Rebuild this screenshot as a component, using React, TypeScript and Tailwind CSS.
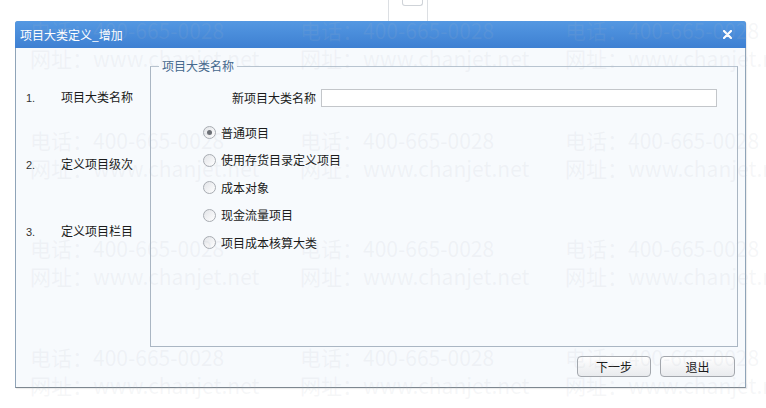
import React, { useState } from 'react';

const steps = [
    { no: '1.', label: '项目大类名称' },
    { no: '2.', label: '定义项目级次' },
    { no: '3.', label: '定义项目栏目' },
];

const kinds = ['普通项目', '使用存货目录定义项目', '成本对象', '现金流量项目', '项目成本核算大类'];

const markCols = [30, 300, 565];
const markRows = [16, 126, 234, 343];

const Radio: React.FC<{ checked: boolean }> = ({ checked }) => (
    <span className="w-[13px] h-[13px] rounded-full border border-[#a8acb2] bg-gradient-to-br from-[#e2e4e8] to-white flex items-center justify-center shrink-0">
        {checked && <span className="w-[5px] h-[5px] rounded-full bg-[#6b6f75]" />}
    </span>
);

const App: React.FC = () => {
    const [kind, setKind] = useState(0);
    const [name, setName] = useState('');

    return (
        <div
            className="relative w-[766px] h-[408px] bg-white overflow-hidden text-[12px] text-[#1a1a1a]"
            style={{ fontFamily: '"Noto Sans CJK SC", "Noto Sans", sans-serif' }}
        >
            {/* faint tab peeking above the dialog */}
            <div className="absolute left-[388px] top-0 w-[40px] h-[21px] border-x border-[#dcdfe3] bg-white">
                <div className="ml-[13px] w-[21px] h-[6px] border border-t-0 border-[#cfd3d8] rounded-b-[3px]" />
            </div>

            <div className="relative ml-[15px] mt-[21px] w-[731px] h-[367px] flex flex-col rounded-t-[3px] border border-[#8fa4b8] border-b-[#7d8790] bg-[#f7fafd] shadow-[1px_1px_1px_rgba(0,0,0,0.08)]">
                <div className="h-[27px] -mx-px -mt-px flex items-center justify-between pl-[5px] pr-[14px] rounded-t-[3px] bg-gradient-to-b from-[#5498e2] to-[#3e80d2] text-white">
                    <span className="leading-none">项目大类定义_增加</span>
                    <svg width="9" height="9" viewBox="0 0 9 9">
                        <path d="M1 1 L8 8 M8 1 L1 8" stroke="white" strokeWidth="2.2" strokeLinecap="round" />
                    </svg>
                </div>

                <div className="flex flex-1">
                    <div className="w-[134px] pt-[39px] flex flex-col gap-[47px]">
                        {steps.map(s => (
                            <div key={s.no} className="h-[20px] flex items-center">
                                <span className="w-[45px] pl-[10px] text-[11px] text-[#333] pt-[3px]" style={{ fontFamily: '"Liberation Sans", sans-serif' }}>{s.no}</span>
                                <span>{s.label}</span>
                            </div>
                        ))}
                    </div>

                    <div className="flex flex-col flex-1 pr-[7px]">
                        <fieldset className="mt-[10px] h-[289px] border border-[#aab6c3] border-t-[#b8c4d0]">
                            <legend className="ml-[8px] px-[3px] leading-[16px] text-[#43678c]">项目大类名称</legend>
                            <div className="flex items-center mt-[15px] pl-[81px]">
                                <span className="w-[84px] text-right">新项目大类名称</span>
                                <input
                                    value={name}
                                    onChange={e => setName(e.target.value)}
                                    className="ml-[5px] w-[396px] h-[18px] border border-[#c3c6ca] bg-white outline-none px-1"
                                />
                            </div>
                            <div className="mt-[12px] pl-[52px] flex flex-col">
                                {kinds.map((k, i) => (
                                    <label key={k} className="h-[27.5px] flex items-center gap-[5px] cursor-pointer" onClick={() => setKind(i)}>
                                        <Radio checked={kind === i} />
                                        <span>{k}</span>
                                    </label>
                                ))}
                            </div>
                        </fieldset>

                        <div className="flex justify-end gap-[9px] mt-[9px] pr-[3px]">
                            <button className="w-[74px] h-[21px] rounded-[4px] border border-[#a3a7ad] bg-gradient-to-b from-white to-[#e9ebee] leading-none">下一步</button>
                            <button className="w-[75px] h-[21px] rounded-[4px] border border-[#a3a7ad] bg-gradient-to-b from-white to-[#e9ebee] leading-none">退出</button>
                        </div>
                    </div>
                </div>
            </div>

            {/* site watermark laid over the screenshot */}
            {markRows.map(y =>
                markCols.map(x => (
                    <div
                        key={`${x}-${y}`}
                        className="absolute pointer-events-none text-[21px] leading-[28px] whitespace-nowrap text-[rgba(176,184,196,0.12)]"
                        style={{ left: x, top: y }}
                    >
                        <div>电话：400-665-0028</div>
                        <div>网址：www.chanjet.net</div>
                    </div>
                ))
            )}
        </div>
    );
};

export default App;
